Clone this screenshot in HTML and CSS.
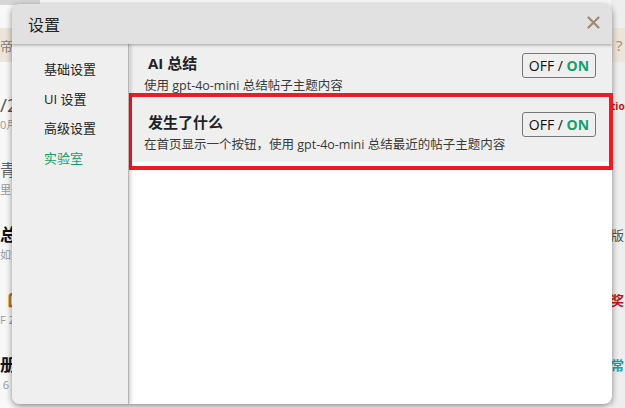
FILE: index.html
```html
<!DOCTYPE html>
<html lang="zh-CN">
<head>
    <meta charset="UTF-8">
    <meta name="viewport" content="width=device-width, initial-scale=1.0">
    <title>设置</title>
    <link rel="stylesheet" href="styles.css">
</head>
<body>
    <!-- page behind the dialog -->
    <div class="page">
        <div class="main">
            <div class="topbar"></div>
            <div class="band"><span class="band-text">帝</span></div>
            <div class="topic">
                <div class="t-title">/2</div>
                <div class="t-meta">0月</div>
            </div>
            <div class="topic">
                <div class="t-title gray">青涯</div>
                <div class="t-meta">里子</div>
            </div>
            <div class="topic">
                <div class="t-title bold">总分</div>
                <div class="t-meta">如复</div>
            </div>
            <div class="topic">
                <div class="t-title gold">Ꮭ</div>
                <div class="t-meta">F 2</div>
            </div>
            <div class="topic">
                <div class="t-title bold">册s</div>
                <div class="t-meta">&nbsp;6</div>
            </div>
        </div>
        <div class="side">
            <div class="topbar light"></div>
            <div class="band"><span class="band-q">?</span></div>
            <div class="s-row"><span class="red small">tion</span></div>
            <div class="s-row"></div>
            <div class="s-row"><span class="grey">版</span></div>
            <div class="s-row"><span class="red">奖</span></div>
            <div class="s-row"><span class="teal">常</span></div>
        </div>
    </div>

    <!-- settings dialog -->
    <div class="dialog">
        <div class="dialog-head">
            <span class="dialog-title">设置</span>
            <svg class="close" width="13" height="13" viewBox="0 0 13 13">
                <path d="M1.5 1.5 L11.5 11.5 M11.5 1.5 L1.5 11.5" stroke="#9f8a76" stroke-width="2.2" stroke-linecap="round"/>
            </svg>
        </div>
        <div class="dialog-body">
            <div class="menu">
                <div class="menu-item">基础设置</div>
                <div class="menu-item">UI 设置</div>
                <div class="menu-item">高级设置</div>
                <div class="menu-item active">实验室</div>
            </div>
            <div class="content">
                <div class="row">
                    <div class="row-text">
                        <div class="row-title">AI 总结</div>
                        <div class="row-desc">使用 gpt-4o-mini 总结帖子主题内容</div>
                    </div>
                    <div class="toggle">OFF / <b>ON</b></div>
                </div>
                <div class="row">
                    <div class="row-text">
                        <div class="row-title">发生了什么</div>
                        <div class="row-desc">在首页显示一个按钮，使用 gpt-4o-mini 总结最近的帖子主题内容</div>
                    </div>
                    <div class="toggle">OFF / <b>ON</b></div>
                </div>
            </div>
        </div>
    </div>
    <!-- annotation box drawn over the screenshot -->
    <div class="mark"></div>
</body>
</html>
```

FILE: styles.css
```css
*{
    margin: 0;
    padding: 0;
    box-sizing: border-box;
    font-family: 'Open Sans', 'Noto Sans CJK SC', sans-serif;
}
body{
    width: 625px;
    height: 408px;
    overflow: hidden;
    background: #f8f8f8;
    position: relative;
}

/* ---------- page behind ---------- */
.page{
    display: flex;
    height: 408px;
}
.main{
    width: 40px;
    overflow: hidden;
    background: #f8f8f8;
    white-space: nowrap;
}
.side{
    margin-left: auto;
    width: 14px;
    overflow: hidden;
    background: #eeeeee;
    white-space: nowrap;
}
.topbar{
    height: 5px;
    background: #d6d6d6;
}
.topbar.light{
    background: #eeeeee;
}
.band{
    margin-top: 23px;
    height: 34px;
    background: #ede4da;
    display: flex;
    align-items: center;
}
.band-text{
    font-size: 13px;
    color: #8a7d70;
}
.band-q{
    font-size: 15px;
    color: #9f8a76;
    margin-left: 5px;
}
.topic{
    height: 65px;
    padding-top: 31px;
}
.t-title{
    height: 24px;
    line-height: 24px;
    font-size: 19px;
    color: #555;
}
.t-title.gray{
    font-size: 16px;
    color: #666;
}
.t-title.bold{
    font-size: 17px;
    font-weight: 700;
    color: #111;
}
.t-title.gold{
    color: #b07d1c;
    font-weight: 700;
    margin-left: 8px;
}
.t-meta{
    height: 16px;
    line-height: 16px;
    font-size: 11px;
    color: #999;
}
.s-row{
    height: 65px;
    padding-top: 31px;
    line-height: 24px;
    font-size: 13px;
}
.s-row:nth-of-type(4){
    padding-top: 2px;
}
.s-row:nth-of-type(4) span{
    position: relative;
    top: -2px;
}
.red{
    color: #c0141b;
    font-weight: 700;
}
.small{
    font-size: 10px;
}
.grey{
    color: #555;
}
.teal{
    color: #18a0a8;
    font-weight: 700;
}

/* ---------- dialog ---------- */
.dialog{
    position: absolute;
    left: 12px;
    top: 4px;
    width: 600px;
    height: 400px;
    background: #fff;
    border-radius: 8px;
    box-shadow: 0 2px 6px rgba(0, 0, 0, 0.45);
    overflow: hidden;
    display: flex;
    flex-direction: column;
}
.dialog-head{
    height: 40px;
    background: #e1e1e1;
    display: flex;
    align-items: center;
    justify-content: space-between;
    padding: 0 12px 0 16px;
    box-shadow: 0 1px 3px rgba(0, 0, 0, 0.35);
    position: relative;
    z-index: 2;
}
.dialog-title{
    font-size: 16px;
    color: #222;
}
.close{
    margin-bottom: 4px;
}
.dialog-body{
    flex: 1;
    display: flex;
}
.menu{
    width: 117px;
    background: #efefef;
    border-right: 1px solid #b5b5b5;
    box-shadow: 2px 0 3px rgba(0, 0, 0, 0.18);
    padding: 14px 0 0 32px;
    position: relative;
    z-index: 1;
}
.menu-item{
    height: 29.5px;
    line-height: 22px;
    font-size: 13px;
    color: #222;
}
.menu-item.active{
    color: #14a06b;
}
.content{
    flex: 1;
    padding-left: 1px;
}
.row{
    height: 59px;
    background: #efefef;
    display: flex;
    justify-content: space-between;
    align-items: flex-start;
    padding: 9px 16px 0 14px;
}
.row-title{
    font-size: 15px;
    font-weight: 700;
    color: #222;
    line-height: 20px;
    margin-left: 4px;
    margin-bottom: 5px;
}
.row-desc{
    font-size: 12.5px;
    color: #3a3a3a;
    line-height: 16px;
}
.toggle{
    width: 74px;
    height: 25px;
    border: 1px solid #777;
    border-radius: 3px;
    font-size: 14px;
    color: #111;
    text-align: center;
    line-height: 23px;
}
.toggle b{
    color: #14a06b;
}

/* annotation */
.mark{
    position: absolute;
    left: 128px;
    top: 93px;
    width: 485px;
    height: 77px;
    border: 4px solid #ec1c24;
}
```
